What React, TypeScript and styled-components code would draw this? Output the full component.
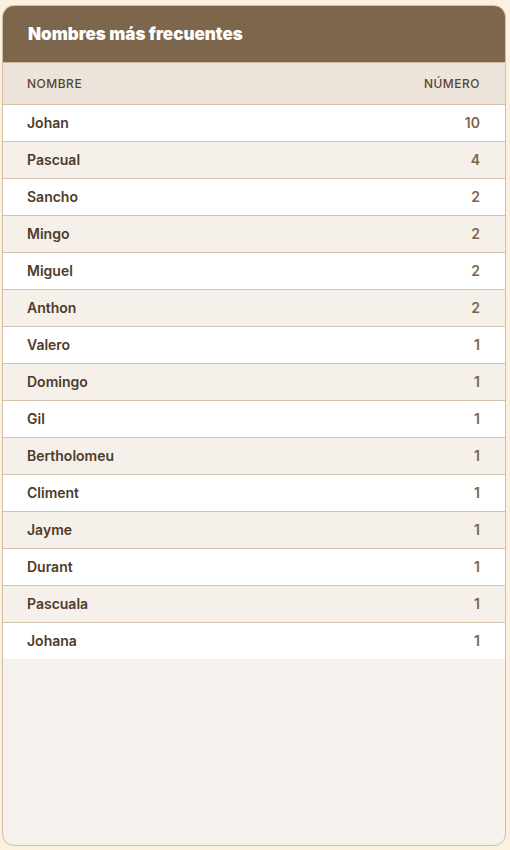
import styled, { createGlobalStyle } from "styled-components";

const GlobalStyle = createGlobalStyle`
    html, body {
        margin: 0;
        padding: 0;
        background: #fcf0df;
        font-family: Inter, "Noto Sans", sans-serif;
    }
`;

const Page = styled.div`
    padding: 5px 4px 4px 2px;
    height: 850px;
    box-sizing: border-box;
`;

const Card = styled.section`
    height: 100%;
    box-sizing: border-box;
    border: 1px solid #d3bfa7;
    border-radius: 12px;
    background: #f5f1ec;
    overflow: hidden;
    display: flex;
    flex-direction: column;
`;

const Header = styled.h2`
    margin: 0;
    height: 57px;
    box-sizing: border-box;
    display: flex;
    align-items: center;
    padding: 0 24px 0 25px;
    background: #7d664b;
    color: #ffffff;
    font-size: 17px;
    font-weight: 900;
    border-bottom: 1px solid #cdb89d;
`;

const Table = styled.table`
    width: 100%;
    border-collapse: collapse;
`;

const HeadCell = styled.th<{ $align?: "left" | "right" }>`
    height: 41px;
    box-sizing: border-box;
    padding: 0 25px 0 24px;
    background: #ece4db;
    color: #5b4630;
    font-size: 12px;
    font-weight: 500;
    letter-spacing: 0.5px;
    text-transform: uppercase;
    text-align: ${(p) => p.$align || "left"};
    border-bottom: 1px solid #d6c3ad;
`;

const Row = styled.tr<{ $striped: boolean }>`
    background: ${(p) => (p.$striped ? "#f5f0ea" : "#ffffff")};
    border-bottom: 1px solid #d6c3ad;
    &:last-child {
        border-bottom: none;
    }
`;

const NameCell = styled.td`
    height: 37px;
    box-sizing: border-box;
    padding: 0 24px;
    color: #4e3b29;
    font-size: 14px;
    font-weight: 600;
`;

const CountCell = styled.td`
    padding: 0 25px;
    text-align: right;
    color: #7d664b;
    font-size: 14px;
    font-weight: 600;
`;

const names: { name: string; count: number }[] = [
    { name: "Johan", count: 10 },
    { name: "Pascual", count: 4 },
    { name: "Sancho", count: 2 },
    { name: "Mingo", count: 2 },
    { name: "Miguel", count: 2 },
    { name: "Anthon", count: 2 },
    { name: "Valero", count: 1 },
    { name: "Domingo", count: 1 },
    { name: "Gil", count: 1 },
    { name: "Bertholomeu", count: 1 },
    { name: "Climent", count: 1 },
    { name: "Jayme", count: 1 },
    { name: "Durant", count: 1 },
    { name: "Pascuala", count: 1 },
    { name: "Johana", count: 1 },
];

const App = () => {
    return (
        <>
            <GlobalStyle />
            <Page>
                <Card>
                    <Header>Nombres más frecuentes</Header>
                    <Table>
                        <thead>
                            <tr>
                                <HeadCell>Nombre</HeadCell>
                                <HeadCell $align="right">Número</HeadCell>
                            </tr>
                        </thead>
                        <tbody>
                            {names.map((item, i) => (
                                <Row key={item.name} $striped={i % 2 === 1}>
                                    <NameCell>{item.name}</NameCell>
                                    <CountCell>{item.count}</CountCell>
                                </Row>
                            ))}
                        </tbody>
                    </Table>
                </Card>
            </Page>
        </>
    );
};

export default App;
